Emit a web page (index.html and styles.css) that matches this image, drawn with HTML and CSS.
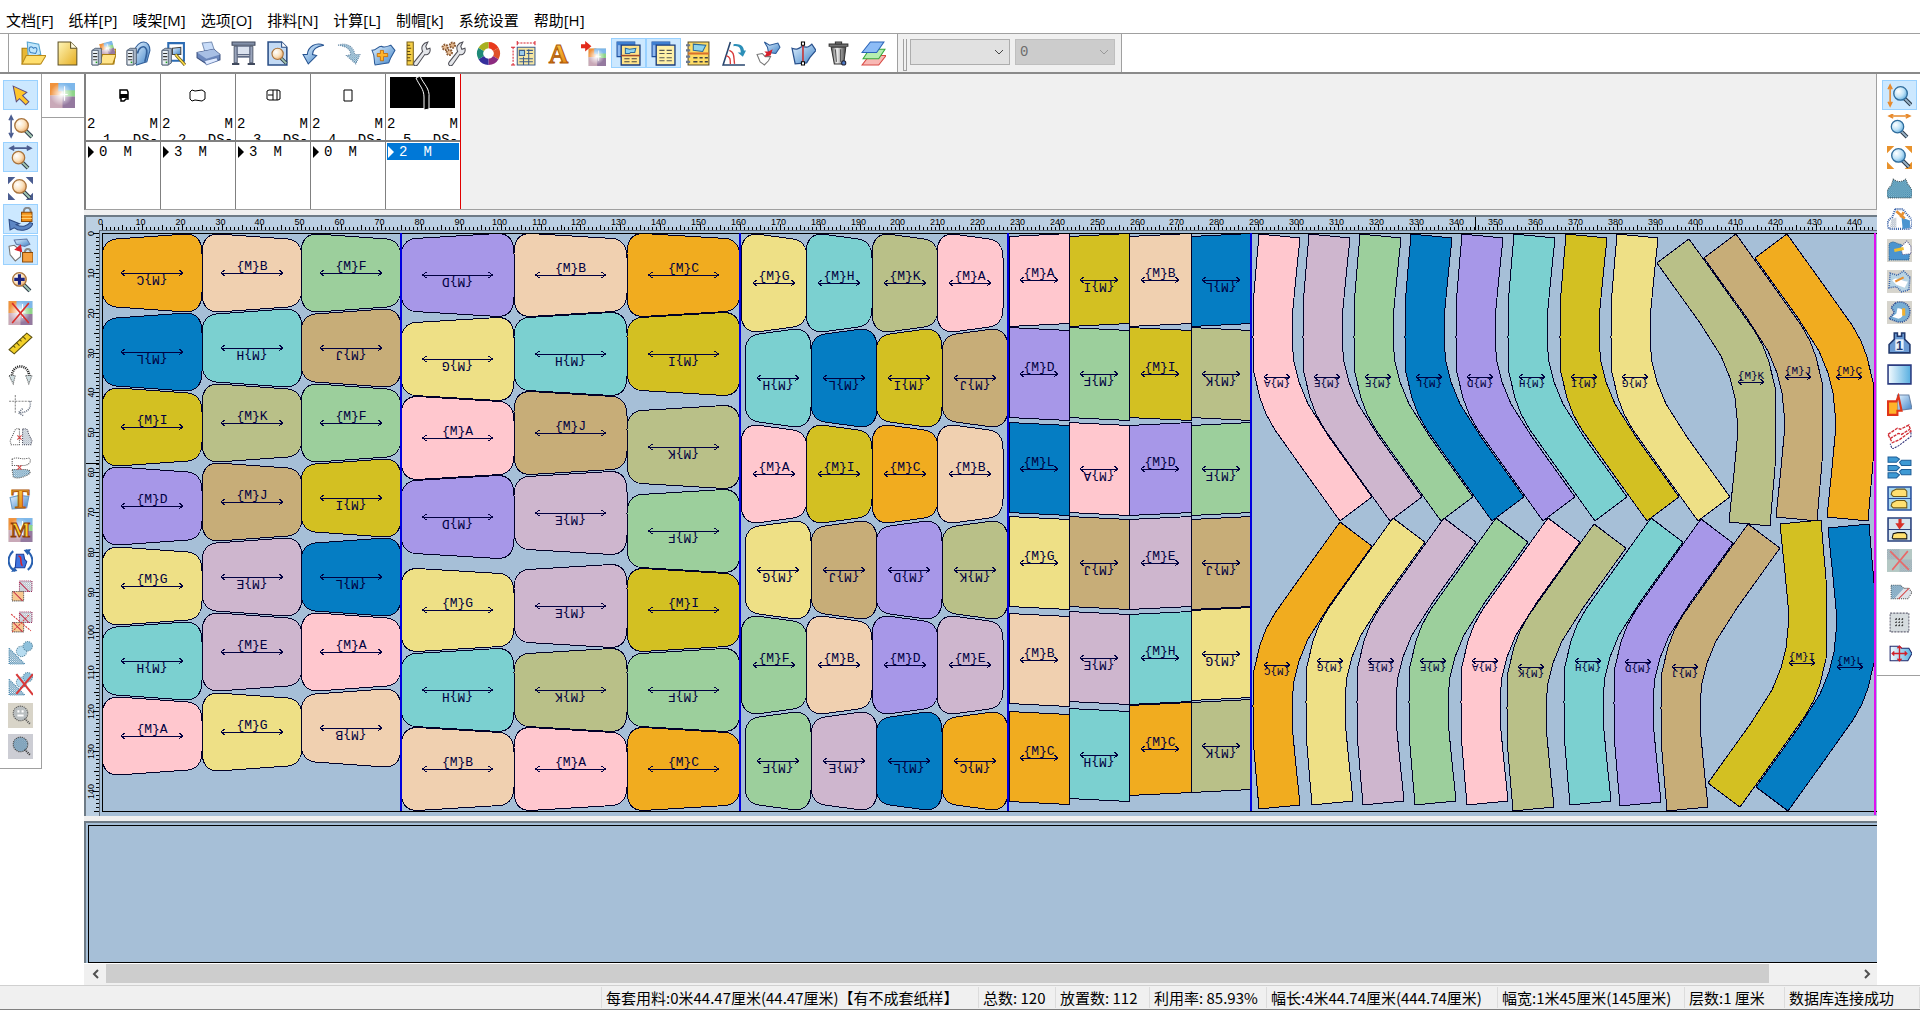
FILE: index.html
```html
<!DOCTYPE html>
<html lang="zh-CN">
<head>
    <meta charset="UTF-8">
    <meta name="viewport" content="width=device-width, initial-scale=1.0">
    <title>排料</title>
    <link rel="stylesheet" href="styles.css">
</head>
<body>
    <!-- 图标库 -->
    <svg class="sprite" aria-hidden="true">
        <defs>
            <linearGradient id="blue" x1="0" y1="0" x2="1" y2="1"><stop offset="0" stop-color="#e4f3ff"/><stop offset="1" stop-color="#3f83c8"/></linearGradient>
            <linearGradient id="gold" x1="0" y1="0" x2="1" y2="1"><stop offset="0" stop-color="#fff6b8"/><stop offset="1" stop-color="#e5ad20"/></linearGradient>
            <linearGradient id="orange" x1="0" y1="0" x2="0" y2="1"><stop offset="0" stop-color="#ffd54a"/><stop offset="1" stop-color="#e0780c"/></linearGradient>
            <linearGradient id="gray" x1="0" y1="0" x2="1" y2="0"><stop offset="0" stop-color="#555"/><stop offset=".4" stop-color="#f0f0f0"/><stop offset="1" stop-color="#444"/></linearGradient>
            <linearGradient id="sky" x1="0" y1="0" x2="1" y2="0"><stop offset="0" stop-color="#f4fbff"/><stop offset="1" stop-color="#56aee0"/></linearGradient>
            <radialGradient id="lens" cx=".35" cy=".35" r=".8"><stop offset="0" stop-color="#fff"/><stop offset=".5" stop-color="#fbe3c0"/><stop offset="1" stop-color="#e59850"/></radialGradient>
            <radialGradient id="lensblue" cx=".35" cy=".35" r=".8"><stop offset="0" stop-color="#fff"/><stop offset=".5" stop-color="#bfe3f8"/><stop offset="1" stop-color="#4a9cd4"/></radialGradient>
            <radialGradient id="glow"><stop offset="0" stop-color="#fff"/><stop offset="1" stop-color="#fff" stop-opacity="0"/></radialGradient>
            <pattern id="dots" width="2" height="2" patternUnits="userSpaceOnUse"><path d="M0 0h1v1H0zM1 1h1v1H1z" fill="#3d7fa8"/></pattern>
            <pattern id="hatch" width="2" height="2" patternUnits="userSpaceOnUse"><path d="M0 0h1v1H0zM1 1h1v1H1z" fill="#9aa8b8"/></pattern>
        </defs>

        <symbol id="p-server" viewBox="0 0 24 24"><path d="M1 9l3-2h6v14l-3 2H1z" fill="#a9b6c6" stroke="#46566b" stroke-width=".8"/><path d="M1 9h6v14H1z" fill="#eaf0f5" stroke="#46566b" stroke-width=".8"/><path d="M2 12h4M2 15h4M2 18h4" stroke="#333"/><path d="M4.500 20.500h1.500" stroke="#1c9b1c" stroke-width="1.500"/></symbol>
        <symbol id="p-picture" viewBox="0 0 24 24"><path d="M0 0h24v24H0z" fill="#d9e2d8"/><path d="M0 0h11v12H0z" fill="#f0923c"/><path d="M8 0h16v8H8z" fill="#7db7ea"/><path d="M13 7h11v6H13z" fill="#8fd58a"/><path d="M0 12h13v12H0z" fill="#c9a9b8"/><path d="M12 13h12v11H12z" fill="#94799f"/><circle cx="11" cy="11" r="11" fill="url(#glow)"/><path d="M14 3v14M10 11h7" stroke="#fff"/></symbol>
        <symbol id="p-lens" viewBox="0 0 24 24"><path d="M15 15l6 6" stroke="#2d3a4a" stroke-width="4"/><path d="M15 15l6 6" stroke="#a3c8b4" stroke-width="2"/><circle cx="11" cy="10" r="6.500" fill="url(#lens)" stroke="#a8733c" stroke-width="1.300"/></symbol>
        <symbol id="p-lensblue" viewBox="0 0 24 24"><path d="M15 15l6 6" stroke="#2d3a4a" stroke-width="4"/><path d="M15 15l6 6" stroke="#9ab4c8" stroke-width="2"/><circle cx="11" cy="10" r="6.500" fill="url(#lensblue)" stroke="#2f6c9c" stroke-width="1.300"/></symbol>
        <symbol id="p-wrench" viewBox="0 0 24 24"><path d="M8 20l8-10c-2-4 0-8 5-9l-2 4 1 3 3-1c1 4-2 7-5 6l-7 10c-2 2-5 0-3-3z" fill="#e4e6ea" stroke="#4d4d55"/></symbol>

        <symbol id="i-open" viewBox="0 0 24 24"><path d="M1 7h6l2 3h9v12H1z" fill="#e7b734" stroke="#a87c10"/><path d="M6 1l11 2 2 10-12 3z" fill="#bfe6fb" stroke="#56a3d0"/><path d="M9 11c-3-5 1-7 3-4 2-2 5 0 2 5z" fill="none" stroke="#3b7fc0"/><path d="M5 14h19l-5 8H1z" fill="#ffdf6e" stroke="#b98a18"/></symbol>
        <symbol id="i-new" viewBox="0 0 24 24"><path d="M2 1h12l6 6v16H2z" fill="url(#gold)" stroke="#5e5126"/><path d="M14 1v6h6" fill="#fffbe0" stroke="#5e5126"/></symbol>
        <symbol id="i-openlib" viewBox="0 0 24 24"><path d="M9 8h15l-2 14H9z" fill="#f2c84c" stroke="#a87c10"/><g transform="rotate(-15 16 7)"><use href="#p-picture" x="9" y="1" width="13" height="13"/></g><path d="M11 13h13l-3 9H8z" fill="#ffe48a" stroke="#a87c10"/><use href="#p-server"/></symbol>
        <symbol id="i-savelib" viewBox="0 0 24 24"><path d="M8 10C9 4 14 1 17 1c4 0 6 4 6 8l-3 11-10 3z" fill="url(#blue)" stroke="#34619b"/><path d="M11 12c1-6 6-8 8-5 2 2 1 6-1 13" fill="none" stroke="#34619b" stroke-width="1.500"/><use href="#p-server"/></symbol>
        <symbol id="i-editlib" viewBox="0 0 24 24"><path d="M7 2h15v17H7z" fill="#fff" stroke="#2c6cb4" stroke-width="2"/><path d="M11 7l8-1v7h-8z" fill="url(#blue)" stroke="#444"/><path d="M14 13l9 10" stroke="#6d5a1a" stroke-width="3"/><path d="M14 13l9 10" stroke="#ffe04a" stroke-width="1.500"/><use href="#p-server"/></symbol>
        <symbol id="i-print" viewBox="0 0 24 24"><path d="M6 2l9-1 3 9-9 2z" fill="#c8dcf8" stroke="#7d94b8"/><path d="M1 11l16-3 6 5v5l-13 4-9-6z" fill="#6c88bd" stroke="#3a4f7e"/><path d="M1 11l16-3 6 5-13 4z" fill="#a8bfe4"/><path d="M8 19l12-3 1 3-11 4z" fill="#dfeaff" stroke="#5874a8" stroke-width=".7"/></symbol>
        <symbol id="i-plot" viewBox="0 0 24 24"><path d="M1 1h22v3H1z" fill="#8390a8" stroke="#3f485c"/><path d="M3 5h3v16H3zM18 5h3v16h-3z" fill="#9aa5bc" stroke="#3f485c" stroke-width=".8"/><path d="M6 5h12v8H6z" fill="#dbe2ee" stroke="#5e6a84"/><path d="M6 15h12" stroke="#5e6a84" stroke-width="2"/><path d="M1 22h7M16 22h7" stroke="#3f485c" stroke-width="2"/></symbol>
        <symbol id="i-preview" viewBox="0 0 24 24"><path d="M2 1h13l5 5v17H2z" fill="#c3daf4" stroke="#2b4f86" stroke-width="1.500"/><path d="M15 1v5h5" fill="#fff" stroke="#2b4f86"/><use href="#p-lens" x="2" y="4" width="20" height="20"/></symbol>
        <symbol id="i-undo" viewBox="0 0 24 24"><path d="M22 4C14 1 7 5 6 13H2l5 9 8-8-4-1c0-5 4-8 11-9z" fill="url(#blue)" stroke="#245290"/></symbol>
        <symbol id="i-redo" viewBox="0 0 24 24"><path d="M2 4c8-3 15 1 16 9h5l-4 9-9-8 4-1c0-5-4-8-12-9z" fill="url(#dots)" stroke="#6d8ca8" stroke-dasharray="1 1"/></symbol>
        <symbol id="i-piece-add" viewBox="0 0 24 24"><path d="M1 9c5 0 5-4 9-4 3 2 6 0 9-1l4 5-4 7-2 5-13 2c-2-4 1-6-3-14z" fill="url(#blue)" stroke="#2b5a98"/><path d="M9 9h3v3h4v3h-4v4H9v-4H6v-3h3z" fill="#ffb42a" stroke="#c36a06" stroke-width=".8"/></symbol>
        <symbol id="i-measure" viewBox="0 0 24 24"><path d="M1 1h6v22H1z" fill="#f5cf48" stroke="#7e6418"/><path d="M1 4h3M1 7h4M1 10h3M1 13h4M1 16h3M1 19h4" stroke="#604a10"/><use href="#p-wrench"/></symbol>
        <symbol id="i-setup" viewBox="0 0 24 24"><circle cx="4" cy="6" r="2.500" fill="#e8c09a" stroke="#8a5a34" stroke-width="2" stroke-dasharray="1.500 1"/><circle cx="11" cy="4" r="2.500" fill="#e0b48a" stroke="#8a5a34" stroke-width="2" stroke-dasharray="1.500 1"/><circle cx="8" cy="11" r="2.500" fill="#e8c09a" stroke="#8a5a34" stroke-width="2" stroke-dasharray="1.500 1"/><use href="#p-wrench"/></symbol>
        <symbol id="i-ring" viewBox="0 0 24 24"><g fill="none" stroke-width="6"><path d="M12 4a8 8 0 0 1 7 4" stroke="#e83a1c"/><path d="M19 8a8 8 0 0 1 0 8" stroke="#e0502a"/><path d="M19 16a8 8 0 0 1-7 4" stroke="#8c2a80"/><path d="M12 20a8 8 0 0 1-7-4" stroke="#352f9c"/><path d="M5 16a8 8 0 0 1 0-8" stroke="#1f8a78"/><path d="M5 8a8 8 0 0 1 7-4" stroke="#a8b020"/></g></symbol>
        <symbol id="i-grid" viewBox="0 0 24 24"><path d="M6 6h17v17H6z" fill="#f6e6a2" stroke="#3b5c8c"/><path d="M8 9h5v5H8z" fill="#9ccbe8" stroke="#3b5c8c"/><path d="M15 9h6M15 12h6M8 17h13M8 20h13M12 15v8M17 8v15" stroke="#3b5c8c"/><path d="M6 2h17M2 6v17" stroke="#d8202c" stroke-dasharray="2 1"/><path d="M6 0v4M23 0v4M0 6h4M0 23h4" stroke="#d8202c"/></symbol>
        <symbol id="i-text" viewBox="0 0 24 24"></symbol>
        <symbol id="i-import" viewBox="0 0 24 24"><use href="#p-picture" x="7" y="7" width="17" height="17"/><path d="M0 3h4V0l6 5-6 5V7H0z" fill="#e22a1a"/></symbol>
        <symbol id="i-win-piece" viewBox="0 0 24 24"><path d="M1 1h17v14H1z" fill="#8db8f0" stroke="#1b4d9c"/><path d="M1 1h17v3H1z" fill="#3f7fd0"/><path d="M5 4h18v19H5z" fill="#ffe48a" stroke="#1b3d7c" stroke-width="1.300"/><path d="M5 14h18" stroke="#a04a2c" stroke-width="1.500"/><path d="M9 7l4 1 6-1-1 4-4 0-1 1H9z" fill="#8fd3ec" stroke="#2b6a9c"/><path d="M8 17h5M15 17h5M8 20h5M15 20h5" stroke="#444"/></symbol>
        <symbol id="i-win-list" viewBox="0 0 24 24"><path d="M1 1h17v14H1z" fill="#8db8f0" stroke="#1b4d9c"/><path d="M1 1h17v3H1z" fill="#3f7fd0"/><path d="M5 4h18v19H5z" fill="#fff0a8" stroke="#1b3d7c" stroke-width="1.300"/><path d="M8 9h5M15 9h5M8 12h5M15 12h5M8 16h5M15 16h5M8 19h5M15 19h5" stroke="#555"/></symbol>
        <symbol id="i-table" viewBox="0 0 24 24"><path d="M2 1h20v22H2z" fill="#ffdc64" stroke="#554a2a"/><path d="M7 3l12 1-3 6-9-1z" fill="#8fd3ec" stroke="#2b6a9c"/><path d="M2 12h20" stroke="#d8702c" stroke-width="2"/><path d="M7 16h4M13 16h3M18 16h3M7 20h4M13 20h3M18 20h3" stroke="#444" stroke-width="1.500"/><path d="M0 4h4M0 9h4M0 15h4M0 20h4" stroke="#6a7890" stroke-width="2"/></symbol>
        <symbol id="i-angle" viewBox="0 0 24 24"><path d="M9 1L2 23h21" fill="none" stroke="#28456e" stroke-width="1.500"/><path d="M8 9c5 2 4 5 5 13M5 14c4 1 4 4 4 8" fill="none" stroke="#d83a3a" stroke-width="1.300"/><path d="M12 5c5-1 7 2 7 6h-3l5 4 3-6h-2c0-4-4-7-10-6z" fill="#2c8fb8"/></symbol>
        <symbol id="i-swap" viewBox="0 0 24 24"><path d="M8 1l5 3 8-2 2 4-4 6-7-1-1-5z" fill="url(#blue)" stroke="#2b5a98"/><path d="M1 13l5-1 3 3 5 0-2 4-4 4-4-3z" fill="#fff" stroke="#777"/><path d="M16 8l-2 6-6 1 2-3-2-2 4 0z" fill="#d8202c"/></symbol>
        <symbol id="i-split" viewBox="0 0 24 24"><path d="M1 7c5 2 7 0 10-2 5 2 7 0 9-2l4 6-6 7-3 5-11 1z" fill="url(#blue)" stroke="#28508c" stroke-width="1.200"/><path d="M11.500 1v22" stroke="#c83030" stroke-width="1.500"/><path d="M10 1h3v3h-3zM10 20h3v3h-3z" fill="#fff" stroke="#000"/></symbol>
        <symbol id="i-trash" viewBox="0 0 24 24"><path d="M5 6h14l-2 16H8z" fill="url(#gray)" stroke="#333"/><path d="M3 3h18v2H3zM9 1h6v2H9z" fill="#888" stroke="#333"/><path d="M9 8l1 12M14 8v12" stroke="#555"/><circle cx="17" cy="21" r="2" fill="#4b78c4" stroke="#223"/></symbol>
        <symbol id="i-layers" viewBox="0 0 24 24"><path d="M8 14h16l-7 9H1z" fill="#f8b8b4" stroke="#d84a44"/><path d="M8 8h15l-6 9H2z" fill="#b6eeb0" stroke="#35a83a"/><path d="M9 1h13l-7 10H1z" fill="#8dbcf6" stroke="#2b64b8"/></symbol>

        <symbol id="i-select" viewBox="0 0 24 24"><path d="M5 3l13 6-4 3 6 6-3 3-6-6-3 3z" fill="#ffc62a" stroke="#5c4a7c"/></symbol>
        <symbol id="i-zoom-v" viewBox="0 0 24 24"><use href="#p-lens" x="2" y="1"/><path d="M3 3v18M1 6l2-4 2 4M1 18l2 4 2-4" fill="none" stroke="#4a5c90" stroke-width="1.500"/></symbol>
        <symbol id="i-zoom-h" viewBox="0 0 24 24"><use href="#p-lens" y="3" width="22" height="22"/><path d="M3 3h18M6 1L2 3l4 2M18 1l4 2-4 2" fill="none" stroke="#4a5c90" stroke-width="1.500"/></symbol>
        <symbol id="i-zoom-all" viewBox="0 0 24 24"><path d="M0 1h7L0 8zM24 1h-7l7 7zM0 23h7l-7-7zM24 23h-7l7-7z" fill="#4a5c90"/><use href="#p-lens"/></symbol>
        <symbol id="i-lock" viewBox="0 0 24 24"><path d="M1 12l10 4-3 1c6 3 11 1 13-2l3 1c-3 7-13 8-18 4l-4 2z" fill="#5d86c4" stroke="#2c4a84"/><path d="M15 6c0-7 7-7 7 0" fill="none" stroke="#888" stroke-width="2"/><path d="M13 5h10v9H13z" fill="#f09018" stroke="#8c4a08"/><path d="M13 8h10M13 11h10" stroke="#ffd070"/></symbol>
        <symbol id="i-lock-piece" viewBox="0 0 24 24"><path d="M6 2l12-1 3 5-5 2-8-2z" fill="url(#blue)" stroke="#607aa8"/><path d="M1 8l5-1 6 5 0 6-5 4-5-6z" fill="#fff" stroke="#777"/><path d="M12 7l-5 4 6 2z" fill="#d8202c" stroke="#d8202c"/><path d="M16 15c0-6 6-6 6 0" fill="none" stroke="#888" stroke-width="2"/><path d="M14 14h10v9H14z" fill="#f4a040" stroke="#8c4a08"/></symbol>
        <symbol id="i-zoom-in" viewBox="0 0 24 24"><use href="#p-lens"/><path d="M11 5v10M6 10h10" stroke="#1b2380" stroke-width="3"/></symbol>
        <symbol id="i-nopic" viewBox="0 0 24 24"><use href="#p-picture" y="1" width="24" height="23"/><path d="M4 3l16 19M20 3L4 22" stroke="#d8302c" stroke-width="1.500"/></symbol>
        <symbol id="i-ruler" viewBox="0 0 24 24"><path d="M1 18L18 2l5 4L6 22z" fill="#f2d028" stroke="#5c5010"/><path d="M5 14l2 2M8 11l3 3M11 8l2 2M14 5l3 3" stroke="#5c5010"/></symbol>
        <symbol id="i-arc" viewBox="0 0 24 24"><path d="M4 17C1 0 23 0 20 17" fill="none" stroke="#222" stroke-width="2.500" stroke-dasharray="1 1"/><path d="M1 13h6l-2 8zM17 13h6l-3 8z" fill="#cfdde0" stroke="#555" stroke-dasharray="1 1"/></symbol>
        <symbol id="i-flip" viewBox="0 0 24 24"><path d="M7 2v18M1 8h22" stroke="#888" stroke-dasharray="2 1"/><path d="M21 8c2 7-3 11-10 11m3-4l-4 4 5 3" fill="none" stroke="#667080" stroke-dasharray="1 1" stroke-width="1.500"/></symbol>
        <symbol id="i-mirror-h" viewBox="0 0 24 24"><path d="M11 5c-4-2-5 2-6 5l-3 6 1 4h8z" fill="#fff" stroke="#555" stroke-dasharray="1 1"/><path d="M14 5c5-2 5 2 6 5l3 6-1 4h-8z" fill="url(#hatch)" stroke="#445" stroke-dasharray="1 1"/><path d="M9 11l4 4M13 11l-4 4" stroke="#d84444"/></symbol>
        <symbol id="i-mirror-v" viewBox="0 0 24 24"><path d="M4 4c5-3 7 1 16-1 4 3-1 7-4 7H4z" fill="#fff" stroke="#555" stroke-dasharray="1 1"/><path d="M4 14h13c4 0 6 3 2 5-6 3-10 4-14 2z" fill="url(#dots)" stroke="#555" stroke-dasharray="1 1"/><path d="M9 10l4 4M13 10l-4 4" stroke="#d84444"/></symbol>
        <symbol id="i-tpiece" viewBox="0 0 24 24"><path d="M2 11l9-2 9 1-2 11-14 1z" fill="url(#blue)" stroke="#6a9cc8"/></symbol>
        <symbol id="i-mpic" viewBox="0 0 24 24"><use href="#p-picture" y="1" width="24" height="23"/></symbol>
        <symbol id="i-rotate" viewBox="0 0 24 24"><path d="M5 3C-2 9 0 19 7 22M19 21c7-6 5-15-2-19" fill="none" stroke="#2860b0" stroke-width="2"/><path d="M9 22l-6 1 3-5zM15 2l7-1-3 6z" fill="#2860b0"/><path d="M8 6h7l1 5 2 2-2 6H7z" fill="#3f74e0" stroke="#1c3c98"/><path d="M10 8c4-1 1 8 4 9" fill="none" stroke="#d8202c" stroke-width="1.500"/></symbol>
        <symbol id="i-swap2" viewBox="0 0 24 24"><path d="M11 2h12v10H11z" fill="url(#hatch)" stroke="#902050" stroke-dasharray="1 1"/><path d="M4 12h11v9H4z" fill="#f8c890" stroke="#444" stroke-dasharray="1 1"/><path d="M11 3l9 9M5 12l9 9" stroke="#c02848"/></symbol>
        <symbol id="i-noswap" viewBox="0 0 24 24"><use href="#i-swap2"/><path d="M3 4l19 16M20 5L4 21" stroke="#d84040" stroke-dasharray="2 1"/></symbol>
        <symbol id="i-link" viewBox="0 0 24 24"><path d="M1 7v15h15z" fill="url(#dots)" stroke="#3d7fa8" stroke-dasharray="1 1"/><circle cx="13" cy="10" r="5" fill="#b7dcf0" stroke="#55839c" stroke-dasharray="1 1"/><circle cx="19" cy="5" r="4.500" fill="#8fc1dc" stroke="#55839c" stroke-dasharray="1 1"/></symbol>
        <symbol id="i-unlink" viewBox="0 0 24 24"><use href="#i-link"/><path d="M8 2l16 20M24 2L8 21" stroke="#d83a3a" stroke-width="2"/></symbol>
        <symbol id="i-find1" viewBox="0 0 24 24"><path d="M0 0h24v24H0z" fill="#d8d4c8"/><path d="M16 15l5 5" stroke="#555" stroke-width="2" stroke-dasharray="1 1"/><circle cx="12" cy="10" r="7" fill="url(#hatch)" stroke="#444" stroke-dasharray="1 1"/><path d="M9 8h2M13 8h2M9 12h6" stroke="#fff" stroke-width="2"/></symbol>
        <symbol id="i-find2" viewBox="0 0 24 24"><path d="M0 0h24v24H0z" fill="#cccdd4"/><path d="M16 15l5 5" stroke="#333" stroke-width="2" stroke-dasharray="1 1"/><circle cx="12" cy="10" r="7" fill="url(#dots)" stroke="#333" stroke-dasharray="1 1"/></symbol>

        <symbol id="i-rzoom-v" viewBox="0 0 24 24"><use href="#p-lensblue" x="2"/><path d="M3 2v20M1 6l2-4 2 4M1 18l2 4 2-4" fill="none" stroke="#e88a2c" stroke-width="1.500"/></symbol>
        <symbol id="i-rzoom-h" viewBox="0 0 24 24"><use href="#p-lensblue" y="3" width="22" height="22"/><path d="M2 2h20M6 0L2 2l4 2M18 0l4 2-4 2" fill="none" stroke="#e88a2c" stroke-width="1.500"/></symbol>
        <symbol id="i-rzoom-all" viewBox="0 0 24 24"><path d="M0 1h7L0 8zM24 1h-7l7 7zM0 23h7l-7-7zM24 23h-7l7-7z" fill="#e8922c"/><use href="#p-lensblue"/></symbol>
        <symbol id="i-body" viewBox="0 0 24 24"><path d="M6 3c4 3 8 3 12 0l2 5c5 5 5 9 3 13H1c-3-5 0-9 3-12z" fill="#8cc4d4"/><path d="M6 3c4 3 8 3 12 0l2 5c5 5 5 9 3 13H1c-3-5 0-9 3-12z" fill="url(#dots)" stroke="#4a5a60" stroke-dasharray="1 1"/></symbol>
        <symbol id="i-body-a" viewBox="0 0 24 24"><path d="M8 2h7l5 6c5 4 5 9 2 13H2c-3-5-1-9 3-11z" fill="#fff" stroke="#3a62a8" stroke-width="2" stroke-dasharray="1 1"/><path d="M14 10l8 3v7l-7 1z" fill="#4a94d0"/><path d="M4 12l5-2v10H3z" fill="url(#hatch)"/><path d="M9 4l8 7M16 5l-3 5" stroke="#e89030" stroke-width="2.500"/></symbol>
        <symbol id="i-body-b" viewBox="0 0 24 24"><path d="M0 1h24v22H0z" fill="#d6d4cc"/><path d="M2 6c4-5 7 0 11 0l9 6-1 9H2z" fill="#4a94d0" stroke="#2b6090" stroke-dasharray="1 1"/><path d="M13 9l6-6 4 5 0 7-8 1z" fill="#fff" stroke="#558" stroke-dasharray="1 1"/><path d="M7 12l9-2" stroke="#f0c030" stroke-width="3"/></symbol>
        <symbol id="i-body-c" viewBox="0 0 24 24"><path d="M0 1h24v22H0z" fill="#d6d4cc"/><path d="M3 4l7 2 6-4 6 6-1 12-7 2-5-5-7 1z" fill="#b8d4e4" stroke="#3a62a8" stroke-width="1.500" stroke-dasharray="1 1"/><path d="M5 11c5-5 10 2 15 1l-3 6-8-3z" fill="#fff"/><path d="M8 12l8-4" stroke="#e89030" stroke-width="2"/></symbol>
        <symbol id="i-body-d" viewBox="0 0 24 24"><path d="M0 1h24v22H0z" fill="#d6d4cc"/><path d="M8 3c5-3 14 0 14 8s-6 11-12 10l-8-3 5-6-3-5z" fill="#78aed4" stroke="#2b4a90" stroke-width="1.500" stroke-dasharray="1 1"/><path d="M10 8c8-1 7 9 1 10l-6-2 4-3z" fill="#fff"/><path d="M16 8v7" stroke="#f0b030" stroke-width="3"/></symbol>
        <symbol id="i-vest" viewBox="0 0 24 24"><path d="M7 2h3v3h4V2h3v6l5 5v8H2v-8l5-5z" fill="#6b9bd4" stroke="#20386c" stroke-width="1.500"/><path d="M8 8h8v11H8z" fill="#e8f1fb"/></symbol>
        <symbol id="i-rect" viewBox="0 0 24 24"><path d="M1 3h22v18H1z" fill="url(#sky)" stroke="#2b3c80" stroke-width="1.500"/></symbol>
        <symbol id="i-overlap" viewBox="0 0 24 24"><path d="M10 2h11l3 13-14 2z" fill="url(#blue)" stroke="#6a84a8"/><path d="M1 8h9v13H1z" fill="#ffb42a"/><path d="M1 21V8h8l2-5 3 14h-4v4z" fill="none" stroke="#e03418" stroke-width="2"/></symbol>
        <symbol id="i-cloth" viewBox="0 0 24 24"><path d="M1 10l9-7 3 1 8-3 2 9-12 11-6 3z" fill="#fff"/><path d="M23 8v4l-12 9-6 3-2-5" fill="none" stroke="#303078" stroke-dasharray="2 1"/><path d="M1 10l9-6 3 1 8-4 2 6-11 8-7 3zM3 14l8-5 3 1 8-5" fill="none" stroke="#d02c34" stroke-width="1.300" stroke-dasharray="3 1"/></symbol>
        <symbol id="i-chain" viewBox="0 0 24 24"><g fill="#3f9ad4" stroke="#1f5f98"><path d="M1 2h8l3 2-3 3H1zM1 10h8l3 2-3 3H1zM1 17h8l3 2-3 3H1zM23 5h-9l-2 2 2 3h9zM23 14h-9l-2 2 2 3h9z"/></g></symbol>
        <symbol id="i-two" viewBox="0 0 24 24"><path d="M1 1h22v22H1z" fill="#a7d7ee" stroke="#28509c" stroke-width="1.500"/><path d="M1 12h22" stroke="#28509c"/><path d="M5 5l4-2h8l2 2v5H6l-2-2zM5 16l4-2h8l2 2v5H6l-2-2z" fill="#ffe070" stroke="#6c5818"/></symbol>
        <symbol id="i-down" viewBox="0 0 24 24"><path d="M1 1h22v22H1z" fill="#d6e4ee" stroke="#28407c" stroke-width="1.500"/><path d="M1 12h22" stroke="#28407c"/><path d="M11 2h3v4h3l-5 6-4-6h3z" fill="#d83028"/><path d="M5 20l1-4 4-1h7l2 2v4H6z" fill="#ffe070" stroke="#111"/></symbol>
        <symbol id="i-cross" viewBox="0 0 24 24"><path d="M0 1h24v22H0z" fill="#b4c8c4"/><path d="M0 1h12v10H0zM12 11h12v12H12z" fill="url(#hatch)"/><path d="M3 3l18 18M20 3L5 21" stroke="#e86868" stroke-width="1.500"/></symbol>
        <symbol id="i-cut" viewBox="0 0 24 24"><path d="M4 6h9l3 3h5l3 4-4 6H4z" fill="#dde2e8" stroke="#444" stroke-dasharray="1 1"/><path d="M4 6h9l3 3-9 10H4z" fill="url(#dots)"/><path d="M11 19l10-10" stroke="#d84848"/></symbol>
        <symbol id="i-mesh" viewBox="0 0 24 24"><path d="M3 3h18v18H3z" fill="#d6dcdf" stroke="#667" stroke-dasharray="2 1"/><path d="M8 9h9M8 12h9M8 15h9" stroke="#222" stroke-dasharray="1 2"/><path d="M9 8v9M12 8v9M15 8v9" stroke="#222" stroke-dasharray="1 2"/></symbol>
        <symbol id="i-move" viewBox="0 0 24 24"><path d="M3 5h9l2 2h7l3 5-4 7H3z" fill="url(#sky)" stroke="#20286c"/><path d="M12 5v14M5 12h14M10 7l2-2 2 2M10 17l2 2 2-2M7 10l-2 2 2 2M17 10l2 2-2 2" fill="none" stroke="#d0202c" stroke-width="1.300"/></symbol>
    </svg>

    <div class="app">
        <nav class="menubar">
            <a href="#">文档[F]</a>
            <a href="#">纸样[P]</a>
            <a href="#">唛架[M]</a>
            <a href="#">选项[O]</a>
            <a href="#">排料[N]</a>
            <a href="#">计算[L]</a>
            <a href="#">制帽[k]</a>
            <a href="#">系统设置</a>
            <a href="#">帮助[H]</a>
        </nav>

        <div class="bars">
            <div class="toolbar" id="mainTools"></div>
            <div class="size-bar">
                <span class="grip"></span>
                <select class="combo" aria-label="尺码"><option></option></select>
                <select class="combo" aria-label="数量" disabled><option>0</option></select>
            </div>
        </div>

        <div class="workspace">
            <div class="side-tools" id="leftTools"></div>
            <div class="side-tools side-single" id="colorTools"></div>

            <main class="document">
                <section class="piece-window">
                    <div class="piece-cell">
                        <div class="piece-top">
                            <svg class="thumb" viewBox="0 0 75 36"><path d="M34 15h7l1 2v7h-2l-2 2h-3v-3h-1z" fill="none" stroke="#000" stroke-width="1.500"/><path d="M34 19h8v4h-8z"/></svg>
                            <p><span>2</span><span>M</span></p>
                            <p class="code"><span>1</span><span>DS-</span></p>
                        </div>
                        <div class="piece-sizes"><p><i></i><span>0</span><span>M</span></p></div>
                    </div>
                    <div class="piece-cell">
                        <div class="piece-top">
                            <svg class="thumb" viewBox="0 0 75 36"><path d="M31 15l3 1 7-1 3 2v7l-3 2-7-1-3 1-2-2v-7z" fill="none" stroke="#000"/></svg>
                            <p><span>2</span><span>M</span></p>
                            <p class="code"><span>2</span><span>DS-</span></p>
                        </div>
                        <div class="piece-sizes"><p><i></i><span>3</span><span>M</span></p></div>
                    </div>
                    <div class="piece-cell">
                        <div class="piece-top">
                            <svg class="thumb" viewBox="0 0 75 36"><path d="M31 16l2-1h9l2 1v8l-2 1h-9l-2-1zM37 15v10M41 15v10M32 20h5" fill="none" stroke="#000"/></svg>
                            <p><span>2</span><span>M</span></p>
                            <p class="code"><span>3</span><span>DS-</span></p>
                        </div>
                        <div class="piece-sizes"><p><i></i><span>3</span><span>M</span></p></div>
                    </div>
                    <div class="piece-cell">
                        <div class="piece-top">
                            <svg class="thumb" viewBox="0 0 75 36"><path d="M33 15h8v11h-8z" fill="none" stroke="#000"/></svg>
                            <p><span>2</span><span>M</span></p>
                            <p class="code"><span>4</span><span>DS-</span></p>
                        </div>
                        <div class="piece-sizes"><p><i></i><span>0</span><span>M</span></p></div>
                    </div>
                    <div class="piece-cell active">
                        <div class="piece-top">
                            <svg class="thumb" viewBox="0 0 75 36"><path d="M4 2h65v31H4z"/><path d="M30 3l4-2c4 9 10 12 9 22v11l-5 1V22C38 14 33 10 30 3z" stroke="#fff"/></svg>
                            <p><span>2</span><span>M</span></p>
                            <p class="code"><span>5</span><span>DS-</span></p>
                        </div>
                        <div class="piece-sizes"><p><i></i><span>2</span><span>M</span></p></div>
                    </div>
                </section>

                <section class="marker-window">
                    <svg id="marker" class="marker" role="img" aria-label="唛架"></svg>
                </section>

                <section class="spare-window"></section>

                <div class="scrollbar">
                    <button aria-label="向左"><svg viewBox="0 0 10 10"><path d="M7 1L3 5l4 4"/></svg></button>
                    <div class="track"><div class="handle"></div></div>
                    <button aria-label="向右"><svg viewBox="0 0 10 10"><path d="M3 1l4 4-4 4"/></svg></button>
                </div>
            </main>

            <div class="side-tools side-right" id="rightTools"></div>
        </div>

        <footer class="statusbar">
            <span></span>
            <span>每套用料:0米44.47厘米(44.47厘米)【有不成套纸样】</span>
            <span>总数: 120</span>
            <span>放置数: 112</span>
            <span>利用率: 85.93%</span>
            <span>幅长:4米44.74厘米(444.74厘米)</span>
            <span>幅宽:1米45厘米(145厘米)</span>
            <span>层数:1 厘米</span>
            <span>数据库连接成功</span>
        </footer>
    </div>

    <script src="script.js"></script>
</body>
</html>
```
FILE: styles.css
```css
* {
    box-sizing: border-box;
}

body {
    margin: 0;
    background: #fff;
    color: #000;
    font-family: "Open Sans", "Noto Sans CJK SC", sans-serif;
    font-size: 15px;
}

p {
    margin: 0;
}

.sprite {
    position: absolute;
    width: 0;
    height: 0;
}

.app {
    display: flex;
    flex-direction: column;
    height: 100vh;
    overflow: hidden;
}

/* 菜单 */
.menubar {
    display: flex;
    gap: 15px;
    height: 34px;
    padding: 8px 6px 0;
    border-bottom: 1px solid #a0a0a0;
    line-height: 24px;
}

.menubar a {
    color: #000;
    text-decoration: none;
}

/* 工具栏 */
.bars {
    display: flex;
    height: 40px;
    padding-left: 8px;
    border-bottom: 2px solid #8a8a8a;
}

.toolbar {
    display: flex;
    padding: 4px 6px 0 7px;
    border-left: 1px solid #a0a0a0;
    border-right: 1px solid #a0a0a0;
}

.tool {
    display: flex;
    align-items: center;
    justify-content: center;
    width: 35px;
    height: 30px;
    padding: 0;
    border: 1px solid transparent;
    background: none;
}

.tool svg {
    width: 25px;
    height: 25px;
}

.tool.on {
    background: #cce8ff;
    border-color: #99d1ff;
}

.size-bar {
    display: flex;
    gap: 5px;
    padding: 5px 6px 0 5px;
    background: #f0f0f0;
    border-right: 1px solid #a0a0a0;
}

.grip {
    width: 4px;
    height: 32px;
    margin-right: -2px;
    border: 1px solid #a0a0a0;
    border-top: 0;
}

.combo {
    appearance: none;
    width: 100px;
    height: 26px;
    padding: 0 4px;
    border: 1px solid #adadad;
    border-radius: 0;
    background: #e1e1e1 url("data:image/svg+xml,%3Csvg xmlns='http://www.w3.org/2000/svg' width='10' height='6'%3E%3Cpath d='M1 1l4 4 4-4' fill='none' stroke='%23444'/%3E%3C/svg%3E") no-repeat right 5px center;
    color: #6d6d6d;
    font: 14px "Liberation Mono", monospace;
}

.combo:disabled {
    background-color: #ccc;
    background-image: url("data:image/svg+xml,%3Csvg xmlns='http://www.w3.org/2000/svg' width='10' height='6'%3E%3Cpath d='M1 1l4 4 4-4' fill='none' stroke='%23999'/%3E%3C/svg%3E");
    border-color: #bfbfbf;
    opacity: 1;
}

.workspace {
    display: flex;
    align-items: flex-start;
    flex: 1;
    min-height: 0;
}

.side-tools {
    display: flex;
    flex-direction: column;
    gap: 1px;
    width: 42px;
    padding: 6px 3px 7px;
    border-right: 1px solid #a0a0a0;
    border-bottom: 1px solid #a0a0a0;
}

.side-single {
    border-right: 0;
}

.side-right {
    width: 43px;
    padding-left: 5px;
    border-right: 0;
}

.document {
    display: flex;
    flex-direction: column;
    flex: 1;
    align-self: stretch;
    min-width: 0;
    background: #f0f0f0;
}

/* 纸样窗 */
.piece-window {
    display: flex;
    height: 136px;
    margin-bottom: 5px;
    border-left: 2px solid #808080;
    border-right: 1px solid #a0a0a0;
    border-bottom: 1px solid #a0a0a0;
    font: 14px/16px "Liberation Mono", monospace;
}

.piece-cell {
    width: 75px;
    background: #fff;
    border-right: 1px solid #808080;
}

.piece-cell.active {
    border-right-color: #e00000;
}

.piece-top {
    height: 66px;
    padding-top: 1px;
    overflow: hidden;
}

.thumb {
    display: block;
    width: 75px;
    height: 36px;
    margin-bottom: 5px;
}

.piece-top p {
    display: flex;
    justify-content: space-between;
    padding: 0 2px 0 1px;
}

.piece-top .code {
    padding-left: 17px;
}

.piece-sizes {
    padding: 1px;
    border-top: 2px solid #808080;
}

.piece-sizes p {
    display: flex;
    gap: 16px;
    height: 17px;
    line-height: 18px;
}

.piece-sizes i {
    margin: 3px -11px 3px 1px;
    border: 6px solid transparent;
    border-left: 6px solid #000;
    border-right: 0;
}

.active .piece-sizes p {
    background: #0078d7;
    color: #fff;
}

.active .piece-sizes i {
    border-left-color: #fff;
}

/* 唛架 */
.marker-window {
    margin-bottom: 5px;
    border: solid #6e7b86;
    border-width: 2px 0 0 2px;
    background: #a6bfd7;
}

.marker {
    display: block;
    width: 100%;
    height: 599px;
}

.ruler-bg {
    fill: #bbcfe2;
}

.ruler-edge {
    fill: none;
    stroke: #5f6b78;
}

.ticks {
    fill: none;
    stroke: #000;
}

.ruler-text {
    font: 9px "Liberation Sans", sans-serif;
    text-anchor: middle;
}

.sheet-edge {
    fill: none;
    stroke: #000;
}

.section-line {
    stroke: #0000e0;
    stroke-width: 2px;
}

.end-line {
    stroke: #e010f0;
    stroke-width: 2px;
}

.piece {
    stroke: #000028;
}

.grain {
    fill: none;
    stroke: #000040;
}

.label {
    fill: #000040;
    font: 13px "Liberation Mono", monospace;
    text-anchor: middle;
}

.label.small {
    font-size: 11px;
}

.marker path,
.marker polygon {
    shape-rendering: crispEdges;
}

.spare-window {
    flex: 1;
    padding: 2px 0 2px 2px;
    border: solid #6e7b86;
    border-width: 2px 0 0 2px;
    background: #a6bfd7;
}

.spare-window::before {
    content: "";
    display: block;
    height: 100%;
    border: 1px solid #000;
    border-right: 0;
}

.scrollbar {
    display: flex;
    height: 22px;
    padding-left: 2px;
    border-top: 1px solid #fff;
}

.scrollbar button {
    width: 20px;
    padding: 0;
    border: 0;
    background: none;
}

.scrollbar svg {
    width: 10px;
    height: 10px;
    fill: none;
    stroke: #505050;
    stroke-width: 2px;
}

.track {
    flex: 1;
}

.handle {
    width: 95%;
    height: 19px;
    background: #cdcdcd;
}

/* 状态栏 */
.statusbar {
    display: grid;
    grid-template-columns: 1fr 377px 77px 94px 117px 231px 187px 100px 135px;
    height: 25px;
    padding: 1px 0;
    background: #f0f0f0;
    border-top: 1px solid #d0d0d0;
    border-bottom: 1px solid #808080;
    font: 15px/21px "Noto Sans CJK SC", sans-serif;
    white-space: nowrap;
}

.statusbar span {
    padding-left: 4px;
    border-right: 1px solid #dcdcdc;
}

/* 图标里的字 */
.glyph {
    font: bold 26px "Liberation Serif", serif;
    text-anchor: middle;
    fill: url(#orange);
    stroke: #b05a08;
}

.glyph-M {
    font-size: 20px;
    fill: #ffd030;
    stroke: #8c3a08;
}

.glyph-1 {
    font: bold 12px "Liberation Sans", sans-serif;
    fill: #203c78;
    stroke: none;
}
```
FILE: script.js
```js
// 工具按钮: [图标, 提示, 是否按下, 图标上的字, 字的基线]
const mainTools = [
    ['i-open', '打开'], ['i-new', '新建'], ['i-openlib', '打开款式'], ['i-savelib', '保存'], ['i-editlib', '编辑'],
    ['i-print', '打印'], ['i-plot', '绘图'], ['i-preview', '预览'], ['i-undo', '撤销'], ['i-redo', '重做'],
    ['i-piece-add', '增加纸样'], ['i-measure', '单位'], ['i-setup', '参数'], ['i-ring', '颜色'], ['i-grid', '唛架设定'],
    ['i-text', '字体', 0, 'A', 21], ['i-import', '导入'], ['i-win-piece', '纸样窗', 1], ['i-win-list', '尺码表', 1],
    ['i-table', '纸样资料'], ['i-angle', '旋转'], ['i-swap', '翻转'], ['i-split', '分割'], ['i-trash', '删除'], ['i-layers', '层'],
];

const leftTools = [
    ['i-select', '选择', 1], ['i-zoom-v', '纵向放大'], ['i-zoom-h', '横向放大', 1], ['i-zoom-all', '全部显示'],
    ['i-lock', '旋转限定', 1], ['i-lock-piece', '翻转限定', 1], ['i-zoom-in', '放大'], ['i-nopic', '清除唛架'],
    ['i-ruler', '尺寸'], ['i-arc', '旋转纸样'], ['i-flip', '翻转纸样'], ['i-mirror-h', '水平翻转'],
    ['i-mirror-v', '垂直翻转'], ['i-tpiece', '纸样文字', 0, 'T', 21], ['i-mpic', '唛架文字', 0, 'M', 19], ['i-rotate', '成组'],
    ['i-swap2', '组合'], ['i-noswap', '拆散'], ['i-link', '连接'], ['i-unlink', '断开'], ['i-find1', '查找'], ['i-find2', '查看'],
];

const rightTools = [
    ['i-rzoom-v', '辅唛架纵向', 1], ['i-rzoom-h', '辅唛架横向'], ['i-rzoom-all', '辅唛架全部'], ['i-body', '衣片'],
    ['i-body-a', '衣片一'], ['i-body-b', '衣片二'], ['i-body-c', '衣片三'], ['i-body-d', '衣片四'], ['i-vest', '号码', 0, '1', 18],
    ['i-rect', '矩形'], ['i-overlap', '重叠'], ['i-cloth', '布料'], ['i-chain', '排列'], ['i-two', '双层'],
    ['i-down', '下移'], ['i-cross', '取消'], ['i-cut', '裁剪'], ['i-mesh', '网格'], ['i-move', '移动'],
];

function addTools(id, tools) {
    document.getElementById(id).innerHTML = tools.map(([icon, title, on, glyph, base]) => `
        <button class="tool${on ? ' on' : ''}" title="${title}" aria-label="${title}">
            <svg viewBox="0 0 24 24"><use href="#${icon}"/>${glyph ? `<text class="glyph glyph-${glyph}" x="12" y="${base}">${glyph}</text>` : ''}</svg>
        </button>`).join('');
}

addTools('mainTools', mainTools);
addTools('leftTools', leftTools);
addTools('colorTools', [['p-picture', '颜色方案']]);
addTools('rightTools', rightTools);

const colors = {
    A: '#ffc7ce', B: '#f0d0b0', C: '#f1ac1f', D: '#a797e8', E: '#ceb6ce', F: '#9ccf9c',
    G: '#eee086', H: '#7bd0d0', I: '#d3c022', J: '#c7ad78', K: '#b9c088', L: '#057dc3',
};

// 一厘米的像素数
const CM = 3.987;

// 字母后的 ' 表示旋转 180 度
function parse(code) {
    return { size: code[0], turned: code.length > 1 };
}

function grain(cx, cy, half, code, small) {
    const { size, turned } = parse(code);
    return `<g transform="translate(${cx} ${cy})${turned ? ' rotate(180)' : ''}">
        <path class="grain" d="M${-half} 0H${half}M${4 - half} -3L${-half} 0L${4 - half} 3M${half - 4} -3L${half} 0L${half - 4} 3"/>
        <text class="label${small ? ' small' : ''}" y="-3">{M}${size}</text>
    </g>`;
}

// 圆角片, 左边高右边低
function roundPiece(x, cy, w, h, half, code) {
    const { size, turned } = parse(code);
    const d = `M0 20C0 8 5 0 16 0L${w - 14} 5C${w - 5} 6 ${w} 13 ${w} 24V${h - 24}C${w} ${h - 13} ${w - 5} ${h - 6} ${w - 14} ${h - 5}L16 ${h}C5 ${h} 0 ${h - 8} 0 ${h - 20}Z`;
    const turn = turned ? `rotate(180 ${w / 2} ${h / 2})` : '';
    return `<path class="piece" fill="${colors[size]}" transform="translate(${x} ${cy - h / 2}) ${turn}" d="${d}"/>`
        + grain(x + w / 2, cy, half, code);
}

// 方片, slope 为上下边的倾斜
function squarePiece(x, cy, w, slope, code) {
    const top = cy - 45, bottom = cy + 45;
    const s = slope * 1.5;
    return `<polygon class="piece" fill="${colors[parse(code).size]}" points="${x},${top - s} ${x + w},${top + s} ${x + w},${bottom + s} ${x},${bottom - s}"/>`
        + grain(x + w / 2, cy, 19, code);
}

// 弯条
const strip = [[6, 0], [47, 4], [42, 53], [39, 85], [39, 108], [41, 128], [46, 148], [55, 170], [76, 203], [119, 263],
    [87, 287], [54, 241], [22, 196], [13, 180], [7, 164], [1, 139], [0, 103], [1, 59]];

function stripPiece(x, y, flipX, flipY, code) {
    const points = strip.map(([px, py]) => `${x + (flipX ? 119 - px : px)},${y + (flipY ? 287 - py : py)}`).join(' ');
    return `<polygon class="piece" fill="${colors[parse(code).size]}" points="${points}"/>`
        + grain(x + (flipX ? 94 : 24), y + 143, 13, code, true);
}

function drawPieces() {
    let out = '';

    // 第一段
    const first = [
        [0, ["C'", "L'", 'I', 'D', 'G', "H'", 'A'], [40, 119, 194, 273, 353, 428, 503]],
        [100, ['B', "H'", 'K', 'J', "E'", 'E', 'G'], [40, 115, 190, 269, 344, 419, 499]],
        [199, ['F', "J'", 'F', "I'", "L'", 'A', "B'"], [40, 115, 190, 265, 344, 419, 495]],
    ];
    first.forEach(([x, codes, ys]) => codes.forEach((c, i) => { out += roundPiece(x, ys[i], 100, 78, 31, c); }));

    // 第二段
    const second = [
        [299, ["D'", "G'", 'A', "D'", 'G', "H'", 'B'], [42, 126, 205, 284, 377, 457, 536]],
        [412, ['B', "H'", 'J', "E'", "E'", "K'", 'A'], [42, 121, 200, 280, 373, 457, 536]],
        [525, ['C', "I'", "K'", "F'", 'I', "F'", 'C'], [42, 121, 214, 298, 377, 457, 536]],
    ];
    second.forEach(([x, codes, ys]) => codes.forEach((c, i) => { out += roundPiece(x, ys[i], 113, 83, 35, c); }));

    // 第三段
    const third = [['G', 'H', 'K', 'A'], ["H'", "L'", "I'", "J'"], ['A', 'I', 'C', 'B'],
        ["G'", "J'", "D'", "K'"], ['F', 'B', 'D', 'E'], ["F'", "E'", "L'", "C'"]];
    const thirdY = [50, 145, 241, 337, 432, 528];
    third.forEach((row, r) => row.forEach((c, i) => {
        const xs = r % 2 ? [643, 709, 774, 840] : [639, 704, 770, 835];
        out += roundPiece(xs[i], thirdY[r], 66, 98, 21, c);
    }));

    // 第四段
    const fourth = [
        [['A', "I'", 'B', "L'"], [47, 47, 47, 47], [-1, -1, -1, -1]],
        [['D', "F'", 'I', "K'"], [141, 141, 141, 141], [1, 1, 1, 1]],
        [['L', "A'", 'D', "F'"], [236, 236, 236, 236], [1, 1, -1, -1]],
        [['G', "J'", 'E', "J'"], [330, 330, 330, 330], [1, 1, -1, -1]],
        [['B', "E'", 'H', "G'"], [427, 425, 425, 421], [1, 1, -1, -1]],
        [['C', "H'", 'C', "K'"], [525, 522, 516, 513], [1, 1, -1, -1]],
    ];
    const fourthX = [907, 967, 1027, 1089, 1149];
    fourth.forEach(([codes, ys, slopes]) => codes.forEach((c, i) => {
        out += squarePiece(fourthX[i], ys[i], fourthX[i + 1] - fourthX[i], slopes[i], c);
    }));

    // 第五段
    [["A'", 1151], ["E'", 1201], ["F'", 1252], ["L'", 1303], ["D'", 1354], ["H'", 1406], ["I'", 1458], ["G'", 1509]]
        .forEach(([c, x]) => { out += stripPiece(x, 1, false, false, c); });
    [['K', 1555, 6], ['J', 1602, 1], ['C', 1653, 1]]
        .forEach(([c, x, y]) => { out += stripPiece(x, y, true, true, c); });
    [["C'", 1151, 289], ["G'", 1204, 285], ["E'", 1255, 285], ["F'", 1307, 285], ["A'", 1359, 285],
        ["K'", 1405, 291], ["H'", 1462, 285], ["D'", 1512, 286], ["J'", 1559, 291]]
        .forEach(([c, x, y]) => { out += stripPiece(x, y, false, true, c); });
    [['I', 1606, 287], ['L', 1654, 291]]
        .forEach(([c, x, y]) => { out += stripPiece(x, y, true, false, c); });

    return out;
}

function drawRulers() {
    let ticks = '', labels = '';
    for (let i = 0; i <= 444; i++) {
        const p = Math.round(i * CM) + 0.5;
        const len = i % 10 === 0 ? 6 : i % 5 === 0 ? 5 : 3;
        ticks += `M${p} -3v${-len}`;
        if (i <= 145) ticks += `M-3 ${p}h${-len}`;
        if (i % 10 === 0) {
            labels += `<text class="ruler-text" x="${p - 2}" y="-8">${i}</text>`;
            if (i <= 140) labels += `<text class="ruler-text" transform="translate(-8 ${p}) rotate(-90)">${i}</text>`;
        }
    }
    return `<path class="ruler-bg" d="M-16 -16H3000V-2H-2V600H-16Z"/>
        <path class="ruler-edge" d="M3000 -2.5H-2.5V600"/>
        <path class="ticks" d="${ticks}M1373.5 -16v13M-16 230.5h13"/>${labels}`;
}

document.getElementById('marker').innerHTML = `<g transform="translate(16 16)">
    ${drawRulers()}
    ${drawPieces()}
    <path class="sheet-edge" d="M3000 .5H.5V578.5H3000"/>
    <path class="section-line" d="M299 0V578M638 0V578M906 0V578M1149 0V578"/>
    <path class="end-line" d="M1773 0V582"/>
</g>`;
```
